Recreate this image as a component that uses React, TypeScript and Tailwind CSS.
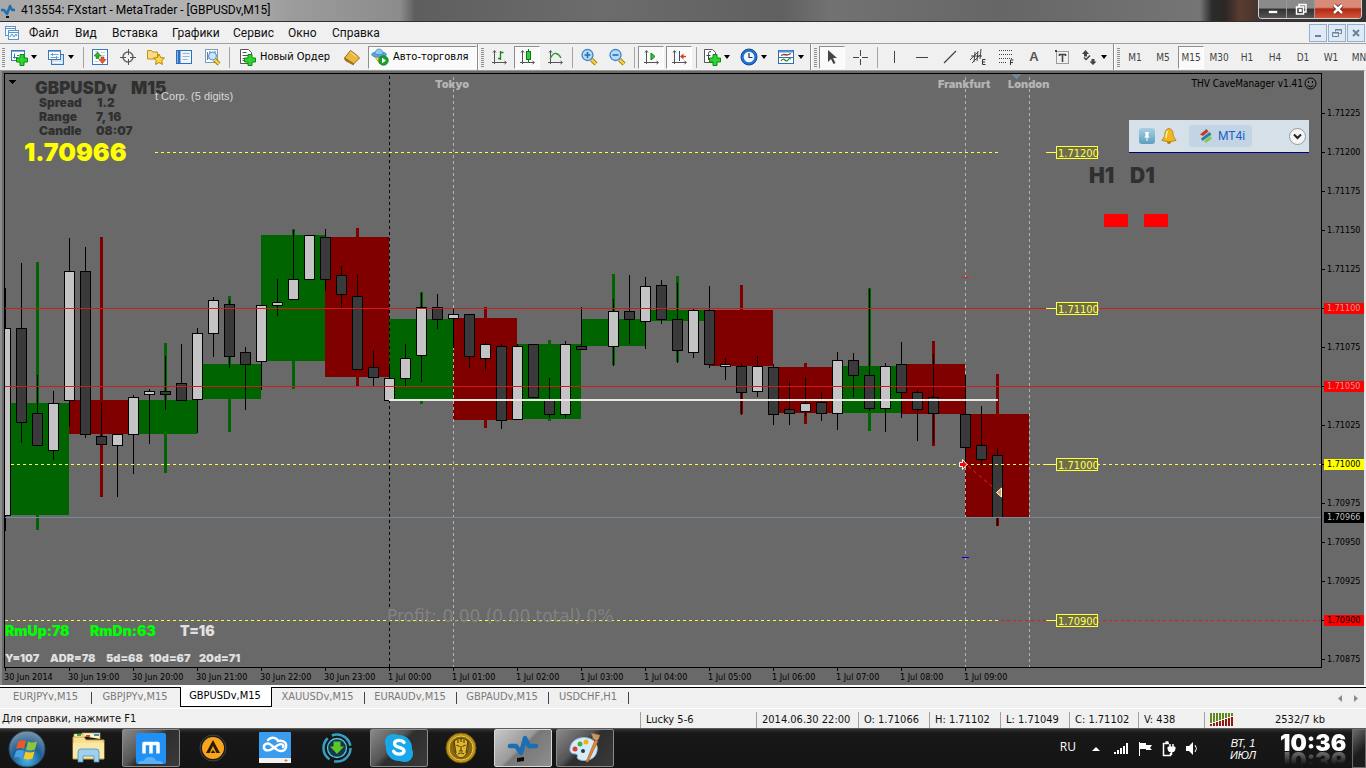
import React from "react";

type Tone = "up" | "down";

const TAHOMA = "font-['DejaVu_Sans_Condensed','Liberation_Sans',sans-serif]";
const BLACK_FACE = "font-['Inter','Liberation_Sans',sans-serif] font-black";

/* ---------- chart data: x, high, body top, body bottom, low, tone ---------- */
const candles: [number, number, number, number, number, Tone][] = [
  [5, 288, 328, 515, 530, "up"],
  [21, 263, 328, 422, 442, "down"],
  [37, 375, 413, 445, 445, "down"],
  [53, 391, 403, 450, 459, "up"],
  [69, 238, 271, 400, 426, "up"],
  [85, 247, 271, 434, 437, "down"],
  [101, 403, 436, 444, 444, "down"],
  [117, 434, 434, 445, 496, "up"],
  [133, 395, 397, 434, 473, "up"],
  [149, 389, 391, 394, 443, "up"],
  [165, 356, 391, 394, 409, "down"],
  [181, 344, 383, 400, 400, "down"],
  [197, 328, 333, 399, 432, "up"],
  [213, 297, 300, 333, 356, "up"],
  [229, 300, 304, 356, 367, "down"],
  [245, 347, 352, 364, 409, "down"],
  [261, 305, 305, 361, 389, "up"],
  [277, 279, 302, 305, 315, "up"],
  [293, 230, 279, 299, 299, "up"],
  [309, 235, 235, 279, 279, "up"],
  [325, 229, 237, 279, 290, "down"],
  [341, 266, 275, 294, 308, "down"],
  [357, 275, 296, 369, 369, "down"],
  [373, 350, 367, 377, 386, "down"],
  [389, 364, 378, 400, 400, "up"],
  [405, 344, 358, 378, 386, "up"],
  [421, 293, 307, 355, 381, "up"],
  [437, 294, 307, 319, 328, "down"],
  [453, 309, 314, 318, 347, "up"],
  [469, 314, 314, 356, 367, "down"],
  [485, 341, 344, 358, 370, "up"],
  [501, 344, 346, 420, 428, "down"],
  [517, 344, 346, 419, 419, "up"],
  [533, 344, 344, 397, 397, "down"],
  [549, 378, 400, 414, 417, "down"],
  [565, 341, 344, 414, 417, "up"],
  [581, 307, 346, 349, 349, "down"],
  [613, 299, 311, 346, 365, "up"],
  [629, 275, 311, 319, 343, "down"],
  [645, 277, 286, 321, 348, "up"],
  [661, 280, 285, 319, 323, "down"],
  [677, 283, 319, 350, 362, "down"],
  [693, 309, 310, 352, 357, "up"],
  [709, 286, 310, 364, 367, "down"],
  [725, 358, 364, 366, 379, "up"],
  [741, 363, 366, 392, 414, "down"],
  [757, 356, 366, 391, 396, "up"],
  [773, 364, 367, 414, 424, "down"],
  [789, 381, 409, 413, 424, "down"],
  [805, 377, 403, 411, 415, "up"],
  [821, 392, 402, 413, 420, "down"],
  [837, 352, 360, 413, 429, "up"],
  [853, 353, 360, 375, 396, "down"],
  [869, 289, 375, 408, 410, "down"],
  [885, 363, 366, 408, 431, "up"],
  [901, 342, 364, 392, 417, "down"],
  [917, 390, 392, 409, 440, "down"],
  [933, 354, 397, 413, 442, "down"],
  [965, 375, 414, 447, 463, "down"],
  [981, 406, 445, 459, 464, "down"],
  [997, 448, 455, 517, 525, "down"],
];

/* hourly blocks: left, right, top, bottom, wick top, wick bottom, tone */
const blocks: [number, number, number, number, number, number, Tone][] = [
  [5, 69, 403, 515, 262, 530, "up"],
  [69, 133, 400, 434, 237, 497, "down"],
  [133, 197, 400, 434, 343, 473, "up"],
  [197, 261, 364, 399, 296, 432, "up"],
  [261, 325, 235, 361, 229, 389, "up"],
  [325, 389, 237, 377, 228, 386, "down"],
  [389, 453, 319, 399, 292, 404, "up"],
  [453, 517, 318, 420, 307, 428, "down"],
  [517, 581, 344, 419, 340, 421, "up"],
  [581, 645, 319, 346, 274, 365, "up"],
  [645, 709, 310, 321, 276, 362, "up"],
  [709, 773, 310, 366, 285, 414, "down"],
  [773, 837, 367, 413, 363, 424, "down"],
  [837, 901, 366, 413, 288, 431, "up"],
  [901, 965, 364, 414, 341, 446, "down"],
  [965, 1029, 414, 517, 374, 526, "down"],
];

const prices: { v: string; cls?: string }[] = [
  { v: "1.71225" }, { v: "1.71200" }, { v: "1.71175" }, { v: "1.71150" }, { v: "1.71125" },
  { v: "1.71100", cls: "bg-[#ff0000] text-[#d09a9a]" },
  { v: "1.71075" },
  { v: "1.71050", cls: "bg-[#ff0000] text-[#d09a9a]" },
  { v: "1.71025" },
  { v: "1.71000", cls: "bg-[#ffff00] text-black" },
  { v: "1.70975" }, { v: "1.70950" }, { v: "1.70925" },
  { v: "1.70900", cls: "bg-[#ff0000] text-black" },
  { v: "1.70875" },
];

const times = [
  "30 Jun 2014", "30 Jun 19:00", "30 Jun 20:00", "30 Jun 21:00", "30 Jun 22:00", "30 Jun 23:00",
  "1 Jul 00:00", "1 Jul 01:00", "1 Jul 02:00", "1 Jul 03:00", "1 Jul 04:00", "1 Jul 05:00",
  "1 Jul 06:00", "1 Jul 07:00", "1 Jul 08:00", "1 Jul 09:00",
];

function PriceTag({ y, text }: { y: number; text: string }) {
  return (
    <g>
      <line x1="1046" x2="1057" y1={y + 0.5} y2={y + 0.5} stroke="#ffff40" />
      <rect x="1056.5" y={y - 5.5} width="41" height="12" fill="#6e6e4c" stroke="#ffff40" />
      <text x="1058" y={y + 5} fill="#ffff50" className={`${TAHOMA} text-[11px]`}>{text}</text>
    </g>
  );
}

function Plot() {
  return (
    <svg className="block h-full w-full" role="img" aria-label="GBPUSDv M15 chart">
      <g transform="translate(-5 -74)" shapeRendering="crispEdges">
        {blocks.map(([l, r, t, b, wt, wb, tone]) => (
          <g key={l} fill={tone === "up" ? "#006400" : "#800000"}>
            <rect x={l} y={t} width={r - l} height={b - t} />
            <rect x={l + 31} y={wt} width="3" height={wb - wt} />
          </g>
        ))}
        <line x1="389.5" x2="389.5" y1="76" y2="668" stroke="#000" strokeDasharray="3 3" />
        {[453.5, 965.5, 1029.5].map((x) => (
          <line key={x} x1={x} x2={x} y1="77" y2="668" stroke="#b4b4b4" strokeDasharray="3 3" />
        ))}
        {candles.map(([x, h, t, b, l, tone]) => (
          <g key={x} stroke="#000">
            <line x1={x + 0.5} x2={x + 0.5} y1={h} y2={l + 1} />
            <rect x={x - 4.5} y={t + 0.5} width="10" height={b - t} fill={tone === "up" ? "#c4c4c4" : "#3a3a3a"} />
          </g>
        ))}
        <line x1="5" x2="110%" y1="517.5" y2="517.5" stroke="#778899" />
        <line x1="5" x2="110%" y1="308.5" y2="308.5" stroke="#c81e1e" />
        <line x1="5" x2="110%" y1="386.5" y2="386.5" stroke="#c81e1e" />
        <line x1="155" x2="999" y1="152.5" y2="152.5" stroke="#ffff40" strokeDasharray="3 3" />
        <line x1="11" x2="110%" y1="464.5" y2="464.5" stroke="#ffff40" strokeDasharray="3 3" />
        <line x1="5" x2="999" y1="620.5" y2="620.5" stroke="#ffff40" strokeDasharray="3 3" />
        <line x1="1001" x2="110%" y1="620.5" y2="620.5" stroke="#e01818" strokeDasharray="3 3" />
        <rect x="389" y="399" width="609" height="2" fill="#e8e8e0" />
        <rect x="962" y="277" width="7" height="1" fill="#e02020" />
        <rect x="962" y="557" width="7" height="1" fill="#0000e0" />
        <path d="M1012 74h9v1h-1v1h-1v1h-1v1h-1v1h-1v-1h-1v-1h-1v-1h-1v-1h-1z" fill="#708898" />
        <path d="M8 80h8l-4 4z" fill="#000" />
        <PriceTag y={152} text="1.71200" />
        <PriceTag y={308} text="1.71100" />
        <PriceTag y={464} text="1.71000" />
        <PriceTag y={620} text="1.70900" />
        <rect x="1104" y="214" width="24" height="13" fill="#ff0000" />
        <rect x="1144" y="214" width="24" height="13" fill="#ff0000" />
      </g>
      <g transform="translate(-5 -74)">
        <path d="M968 466 L995 489" stroke="#e02020" strokeDasharray="4 3" />
        <path d="M959.5 462.500h3v-3l4.500 5-4.500 5v-3h-3z" fill="#ff0000" stroke="#fff" />
        <path d="M1001.500 488v9l-5-4.500z" fill="#d9a030" stroke="#fff" />
        <g className={BLACK_FACE}>
          <g fill="#303030">
            <text x="35" y="94" className="text-[17px]">GBPUSDv</text>
            <text x="131" y="94" className="text-[17px]">M15</text>
            <g className="text-[12px]">
              <text x="39" y="107">Spread</text><text x="97" y="107">1.2</text>
              <text x="39" y="121">Range</text><text x="96" y="121">7, 16</text>
              <text x="39" y="135">Candle</text><text x="96" y="135">08:07</text>
            </g>
            <text x="1089" y="183" className="text-[21px]">H1</text>
            <text x="1130" y="183" className="text-[21px]">D1</text>
          </g>
          <text x="24" y="161" fill="#ffff00" className="text-[25px]">1.70966</text>
          <g fill="#b4b4b4" className="text-[11px]">
            <text x="435" y="88">Tokyo</text>
            <text x="938" y="88">Frankfurt</text>
            <text x="1008" y="88">London</text>
          </g>
          <g fill="#00ff00" className="text-[14px]">
            <text x="5" y="636">RmUp:78</text>
            <text x="90" y="636">RmDn:63</text>
            <text x="180" y="636" fill="#e0e0e0">T=16</text>
          </g>
          <g fill="#e0e0e0" className="text-[11px]">
            <text x="5" y="662">Y=107</text><text x="50" y="662">ADR=78</text>
            <text x="106" y="662">5d=68</text><text x="149" y="662">10d=67</text>
            <text x="199" y="662">20d=71</text>
          </g>
        </g>
        <text x="155" y="100" fill="#d8d8d8" className="font-['Liberation_Sans',sans-serif] text-[11px]">t Corp. (5 digits)</text>
        <text x="387" y="622" fill="#828282" className="font-['DejaVu_Sans','Liberation_Sans',sans-serif] text-[17px]">Profit: 0.00 (0.00 total) 0%</text>
        <g stroke="#000" fill="none">
          <circle cx="1310.500" cy="83.500" r="5.500" />
          <path d="M1307.500 85.500q3 3 6 0" />
          <path d="M1308.500 81v2M1312.500 81v2" />
        </g>
      </g>
    </svg>
  );
}

/* ---------- toolbar icons ---------- */
function Ico({ children, s = 18 }: { children: React.ReactNode; s?: number }) {
  return (
    <svg width={s} height={s} viewBox="0 0 18 18" fill="none" className="shrink-0" aria-hidden="true">{children}</svg>
  );
}
const Plus = () => <path d="M10 6.500h4v3.500h3.500v4H14v3.500h-4V14H6.500v-4H10z" fill="#2fd52f" stroke="#0a8a12" />;
const Axes = ({ children }: { children: React.ReactNode }) => (
  <Ico>
    <path d="M4.500 3v13M2 14.500h14M3 4.500l1.500-2 1.500 2M14.500 13l2 1.500-2 1.500" stroke="#555" />
    {children}
  </Ico>
);
const Handle = () => <><path d="M11.500 11.500l4.500 4.500" stroke="#8a6a10" strokeWidth="4" /><path d="M11.500 11.500l4.500 4.500" stroke="#f5cf40" strokeWidth="2.500" /></>;

const I = {
  newChart: <Ico><rect x="1.500" y="2.500" width="13" height="10" fill="#fff" stroke="#3b78b5" /><path d="M2 3.500h12" stroke="#7db0e0" /><path d="M4.500 5.500v5M3 9.500h5M7 7.500h2" stroke="#3b78b5" /><Plus /></Ico>,
  profiles: <Ico><rect x="4.500" y="6.500" width="12" height="10" fill="#cfe3f7" stroke="#3b78b5" /><rect x="1.500" y="2.500" width="12" height="9" fill="#fff" stroke="#3b78b5" /><path d="M2 3.500h11" stroke="#7db0e0" /><path d="M3.500 6.500h8M3.500 9.500h8M5.500 5v3M9.500 8v3" stroke="#6f9fce" /><path d="M6 14.500h9" stroke="#fff" /></Ico>,
  market: <Ico><rect x="1.500" y="1.500" width="15" height="15" fill="#fff" stroke="#3b78b5" /><path d="M4 3.500h3M10 4.500h4M10 7.500h4M3.500 13.500h4" stroke="#b8cde0" /><path d="M3 8l3.500-4L10 8H8v2.500H5V8z" fill="#28b828" stroke="#117a11" strokeWidth=".6" /><path d="M8 11.500l3.500 4 3.500-4h-2V9h-3v2.500z" fill="#e85a28" stroke="#a83010" strokeWidth=".6" /></Ico>,
  target: <Ico><circle cx="9" cy="9" r="5" stroke="#666" strokeWidth="1.500" /><path d="M9.500 1v6M9.500 11v6M1 9.500h6M11 9.500h6" stroke="#555" /></Ico>,
  favorites: <Ico><path d="M.5 2.500h4l1 1.500h5v7H.5z" fill="#f8dc80" stroke="#c09018" /><path d="M12 6l1.700 3.500 3.800.500-2.800 2.500.8 4-3.500-2-3.500 2 .8-4L6.500 10l3.800-.5z" fill="#ffd840" stroke="#b88410" /></Ico>,
  navigator: <Ico><rect x="1.500" y="2.500" width="15" height="13" fill="#eef5fc" stroke="#3070b8" /><path d="M4 3v12" stroke="#2f6fc8" strokeWidth="3" /><path d="M7.500 5.500h7M7.500 8.500h7M7.500 11.500h5" stroke="#9ab5d0" /></Ico>,
  tester: <Ico><rect x="2.500" y="1.500" width="12" height="13" fill="#fff" stroke="#7d9cba" /><path d="M4.500 4v8M7 3v6M4 10h4M12 3v4" stroke="#5d82a8" /><circle cx="9.500" cy="8" r="4" fill="#c9e4fb" stroke="#4f8ec8" /><Handle /></Ico>,
  order: <Ico><path d="M2.500 1.500h8l3 3v11h-11z" fill="#fff" stroke="#555" /><path d="M4.500 4.500h4M4.500 7.500h6M4.500 10.500h3M4.500 12.500h2" stroke="#555" /><Plus /></Ico>,
  book: <Ico><path d="M1.500 10l6-7.500q7 5 9 7.500l-6 6z" fill="#e9b93e" stroke="#9a6a10" /><path d="M1.500 10q.5 3 1.500 3l7.500 4v-1.500z" fill="#b57a18" stroke="#875808" strokeWidth=".6" /><path d="M7.500 4l6 5" stroke="#fbe7a0" /></Ico>,
  expert: <Ico><path d="M3 8h11l-5 8z" fill="#f2d35a" stroke="#b08a18" strokeWidth=".6" /><ellipse cx="8" cy="6.500" rx="7.500" ry="2.800" fill="#58a8dc" stroke="#2876b0" strokeWidth=".6" /><path d="M3.800 6q.5-5 4.200-5t4.200 5q-4 1.500-8.400 0z" fill="#8accf0" stroke="#2876b0" strokeWidth=".6" /><circle cx="12.500" cy="12.500" r="4.800" fill="#18a428" stroke="#0a6a18" strokeWidth=".6" /><path d="M11 9.800v5.400l4-2.700z" fill="#fff" /></Ico>,
  bars: <Axes><path d="M10.500 3v9M8 10.500h2M11 4.500h2.500" stroke="#128a18" strokeWidth="1.300" /></Axes>,
  candle: <Axes><path d="M10.500 1v13" stroke="#0c7a12" /><rect x="8.500" y="3.500" width="4" height="8" fill="#2fd035" stroke="#0c7a12" /></Axes>,
  line: <Axes><path d="M4 11q3-6 6-5.500 3 .5 5 4.500" stroke="#2c9a34" strokeWidth="1.300" /></Axes>,
  zoomIn: <Ico><Handle /><circle cx="7.500" cy="7" r="5.500" fill="#b5dcfa" stroke="#3f86c6" strokeWidth="1.300" /><path d="M7.500 4v6M4.500 7h6" stroke="#2b6cb0" strokeWidth="1.600" /></Ico>,
  zoomOut: <Ico><Handle /><circle cx="7.500" cy="7" r="5.500" fill="#b5dcfa" stroke="#3f86c6" strokeWidth="1.300" /><path d="M4.500 7h6" stroke="#2b6cb0" strokeWidth="1.600" /></Ico>,
  scroll: <Axes><path d="M9 5v7l4-3.500z" fill="#35c840" stroke="#0f7a18" /></Axes>,
  shift: <Axes><path d="M9.500 3v10" stroke="#1b50a0" /><path d="M16 8.500h-4" stroke="#d04010" strokeWidth="1.300" /><path d="M13.500 5.500v6l-3.500-3z" fill="#d04010" /></Axes>,
  indicators: <Ico><path d="M1.500 1.500h8l3 3v10h-11z" fill="#fff" stroke="#555" /><path d="M8 3.500q-2.500-.5-2.500 2V12M3.500 7.500h4" stroke="#444" /><Plus /></Ico>,
  clock: <Ico><circle cx="9" cy="9" r="8" fill="#2272d4" stroke="#124a94" /><circle cx="9" cy="9" r="5.300" fill="#eef6ff" /><path d="M9 5v4.500h3.500" stroke="#333" strokeWidth="1.200" /></Ico>,
  template: <Ico><rect x="1.500" y="2.500" width="15" height="13" fill="#fff" stroke="#2f6fb4" /><path d="M2 3.500h14" stroke="#4f94dc" strokeWidth="2" /><path d="M2 9.500h14" stroke="#2f6fb4" /><path d="M4 7.500l3-1 3 .5 4-1.500" stroke="#a03020" strokeWidth="1.300" /><path d="M4 13q2-3 4-1t3 0 3-1" stroke="#208a30" strokeWidth="1.200" /></Ico>,
  cursor: <Ico><path d="M5 2v12l3-3 2.500 5 2-1-2.500-5h4z" fill="#444" /></Ico>,
  cross: <Ico><path d="M9.500 2v6M9.500 11v6M2 9.500h6M11 9.500h6" stroke="#444" /></Ico>,
  vline: <Ico><path d="M9.500 3v12" stroke="#444" /></Ico>,
  hline: <Ico><path d="M3 9.500h12" stroke="#444" /></Ico>,
  trend: <Ico><path d="M3 15L15 3" stroke="#444" strokeWidth="1.200" /></Ico>,
  channel: <Ico><path d="M1 12l8-8M3 15l9-9M6 4l-1 10M9 3L8 13M12 1l-1 10M2 8h11" stroke="#444" /><path d="M16.500 11.500h-3v5h3M13.500 14h2.500" stroke="#333" /></Ico>,
  fibo: <Ico><path d="M2 2.500h14M2 6.500h14M2 10.500h14M2 14.500h8" stroke="#444" strokeDasharray="1 1" /><path d="M13.500 17v-5h3M13.500 14.500h2.500" stroke="#333" /></Ico>,
  label: <Ico><path d="M3.500 3.500h12v12h-12z" stroke="#444" strokeDasharray="1 1" /><path d="M6 6.500h7M9.500 6v8M6.500 6v2M12.500 6v2" stroke="#444" strokeWidth="1.600" /><path d="M2 2h2v2H2z" fill="#444" /></Ico>,
  arrows: <Ico><path d="M2 6l3.500-4L9 6H7v2.500H4V6zM9.500 13.500h2V11h3v2.500h2L13 17z" fill="#444" /><path d="M4 9.500l2 2 4-4" stroke="#444" strokeWidth="1.500" /></Ico>,
};

const pressedCls = "border border-[#8f8f8f] border-r-white border-b-white bg-[#fafafa]";

function TB({ icon, label, pressed }: { icon: React.ReactNode; label: string; pressed?: boolean }) {
  return (
    <div className="flex w-7 shrink-0 items-center justify-center">
      <button aria-label={label} className={`flex h-[23px] w-[26px] items-center justify-center ${pressed ? pressedCls : ""}`}>{icon}</button>
    </div>
  );
}
function DD({ icon, label }: { icon: React.ReactNode; label: string }) {
  return (
    <button aria-label={label} className="flex w-[37px] shrink-0 items-center gap-[3px] pl-1">
      {icon}
      <svg width="6" height="4" viewBox="0 0 6 4" aria-hidden="true"><path d="M0 0h6L3 4z" fill="#000" /></svg>
    </button>
  );
}
const Sep = () => <span className="mr-[2px] ml-[3px] h-[21px] w-px shrink-0 self-center bg-[#a5a5a5]" />;
const Grip = () => <span className="mr-px ml-[2px] h-[19px] w-[3px] shrink-0 self-center bg-[repeating-linear-gradient(#8f8f8f_0_1px,#f0f0f0_1px_2px)]" />;
const Edge = () => <span className="w-[2px] shrink-0 self-stretch border-l border-[#8a8a8a] bg-white" />;

function Toolbar() {
  const frames = ["M1", "M5", "M15", "M30", "H1", "H4", "D1", "W1", "MN"];
  return (
    <div className={`${TAHOMA} flex h-[27px] shrink-0 overflow-hidden border-t border-[#a0a0a0] bg-[#f0f0f0] text-[11px]`}>
      <Grip />
      <DD icon={I.newChart} label="Новый график" />
      <DD icon={I.profiles} label="Профили" />
      <Sep />
      <TB icon={I.market} label="Обзор рынка" />
      <TB icon={I.target} label="Окно данных" />
      <TB icon={I.favorites} label="Навигатор" />
      <TB icon={I.navigator} label="Терминал" />
      <TB icon={I.tester} label="Тестер" />
      <Sep />
      <button className="flex w-[106px] shrink-0 items-center gap-1 pl-[6px] whitespace-nowrap">{I.order}Новый Ордер</button>
      <TB icon={I.book} label="Редактор" />
      <button className={`${pressedCls} ml-[2px] flex h-[23px] w-[109px] shrink-0 items-center gap-1 self-center pl-[2px] whitespace-nowrap`}>{I.expert}Авто-торговля</button>
      <Edge />
      <Grip />
      <TB icon={I.bars} label="Бары" />
      <TB icon={I.candle} label="Свечи" pressed />
      <TB icon={I.line} label="Линия" />
      <Sep />
      <TB icon={I.zoomIn} label="Увеличить" />
      <TB icon={I.zoomOut} label="Уменьшить" />
      <Sep />
      <TB icon={I.scroll} label="Автопрокрутка" pressed />
      <TB icon={I.shift} label="Сдвиг графика" pressed />
      <Sep />
      <DD icon={I.indicators} label="Индикаторы" />
      <DD icon={I.clock} label="Периоды" />
      <DD icon={I.template} label="Шаблоны" />
      <Edge />
      <Grip />
      <TB icon={I.cursor} label="Курсор" pressed />
      <TB icon={I.cross} label="Перекрестие" />
      <Sep />
      <TB icon={I.vline} label="Вертикальная линия" />
      <TB icon={I.hline} label="Горизонтальная линия" />
      <TB icon={I.trend} label="Трендовая линия" />
      <TB icon={I.channel} label="Канал" />
      <TB icon={I.fibo} label="Фибоначчи" />
      <TB icon={<span className="font-['Liberation_Sans',sans-serif] text-[13px] font-bold text-[#555]">A</span>} label="Текст" />
      <TB icon={I.label} label="Метка" />
      <DD icon={I.arrows} label="Стрелки" />
      <Edge />
      <Grip />
      {frames.map((f) => (
        <div key={f} className="flex w-7 shrink-0 items-center justify-center">
          <button className={`h-[23px] w-[26px] text-center text-[10px] text-[#444] ${f === "M15" ? pressedCls : ""}`}>{f}</button>
        </div>
      ))}
    </div>
  );
}

/* ---------- window chrome ---------- */
function TitleBar() {
  return (
    <header className="relative flex h-[22px] shrink-0 items-start justify-between border-b border-[#303030] bg-[linear-gradient(90deg,#a8a8a8_0,#b4b4b4_220px,#9c9c9c_290px,#8c8c8c_400px,#5e5e5e_415px,#6c6c6c_600px,#606060_780px,#727272_830px,#666_1000px,#757575_1200px,#2b2b2b_1212px,#2c2625_1225px,#5a3c30_1240px,#403430_1260px,#333_100%)]">
      <div className="flex items-center gap-[5px] pt-[2px]">
        <svg width="16" height="17" viewBox="0 0 16 17" aria-hidden="true"><path d="M1 8h3l3 4 3-8 2 4h3" fill="none" stroke="#1f6fb0" strokeWidth="2.500" strokeLinejoin="round" /><path d="M6 14h3v2H6z" fill="#111" /></svg>
        <h1 className="font-['Roboto','Noto_Sans',sans-serif] text-[12px] leading-[17px] whitespace-nowrap text-black">413554: FXstart - MetaTrader - [GBPUSDv,M15]</h1>
      </div>
      <div className="mr-1 flex h-[19px] shrink-0 overflow-hidden rounded-b-[4px] border border-t-0 border-[#d0d0d0]">
        <button aria-label="Свернуть" className="flex w-7 items-center justify-center border-r border-[#999] bg-[linear-gradient(#8a8a8a_0_45%,#303030_50%,#555)]">
          <svg width="12" height="12" viewBox="0 0 12 12"><rect x="1.500" y="7.500" width="9" height="3" fill="#fff" stroke="#444" strokeWidth=".7" /></svg>
        </button>
        <button aria-label="Восстановить" className="flex w-7 items-center justify-center border-r border-[#999] bg-[linear-gradient(#8a8a8a_0_45%,#303030_50%,#555)]">
          <svg width="12" height="13" viewBox="0 0 12 13" fill="none" stroke="#fff" strokeWidth="1.500"><path d="M4 4V1.500h7V9H9" /><rect x="1.500" y="4" width="7" height="7" /><rect x="4.500" y="6.700" width="1.500" height="1.500" /></svg>
        </button>
        <button aria-label="Закрыть" className="flex w-[46px] items-center justify-center bg-[linear-gradient(#d98a78_0_40%,#b02a14_50%,#d2543a)]">
          <svg width="12" height="12" viewBox="0 0 12 12"><path d="M2 2l8 8M10 2l-8 8" stroke="#5a2018" strokeWidth="4" /><path d="M2 2l8 8M10 2l-8 8" stroke="#fff" strokeWidth="2.500" /></svg>
        </button>
      </div>
    </header>
  );
}

function MenuBar() {
  const items = [
    ["Файл", "w-[46px]"], ["Вид", "w-[37px]"], ["Вставка", "w-[60px]"], ["Графики", "w-[61px]"],
    ["Сервис", "w-[55px]"], ["Окно", "w-[44px]"], ["Справка", "w-[60px]"],
  ];
  const box = "flex h-[18px] w-[18px] items-center justify-center border border-[#8fb0d0] bg-[#dfeaf6]";
  return (
    <div className="flex h-[21px] shrink-0 items-center justify-between bg-[#f0f0f0] pl-1">
      <nav className="flex items-center font-['Roboto','Noto_Sans',sans-serif] text-[12px] text-[#111]">
        <svg width="16" height="16" viewBox="0 0 16 16" className="mr-[9px]" fill="none" stroke="#5b94c8" aria-hidden="true"><rect x="1.500" y="1.500" width="10" height="9" fill="#fff" /><path d="M1.500 3.500h10" /><rect x="4.500" y="5.500" width="10" height="9" fill="#f4f9ff" /><path d="M4.500 7.500h10M6 12l2-3 2 3 2-3 1 2" /></svg>
        {items.map(([t, w]) => (
          <button key={t} className={`${w} text-left whitespace-nowrap`}><span>{t}</span></button>
        ))}
      </nav>
      <div className="flex gap-px pr-px">
        <button aria-label="Свернуть окно" className={box}><svg width="10" height="10" viewBox="0 0 10 10"><path d="M2 8h6" stroke="#6d8299" strokeWidth="2" /></svg></button>
        <button aria-label="Восстановить окно" className={box}><svg width="10" height="10" viewBox="0 0 10 10" fill="none" stroke="#6d8299"><path d="M3.500 3.500v-2h6v4h-2M3 2h7" /><path d="M.5 4.500h6v4h-6zM0 5h7" /></svg></button>
        <button aria-label="Закрыть окно" className={box}><svg width="10" height="10" viewBox="0 0 10 10"><path d="M2 2l6 6M8 2L2 8" stroke="#6d8299" strokeWidth="2" /></svg></button>
      </div>
    </div>
  );
}

function Mt4iBar() {
  return (
    <div className="absolute top-[46px] right-3 flex h-[33px] w-[180px] items-center border-b border-[#000080] bg-[#d6e0e8] pr-[3px] pl-[10px]">
      <button aria-label="Закрепить" className="flex h-4 w-4 items-center justify-center rounded-[3px] bg-[linear-gradient(#a9cfe2,#5d9fc0)]">
        <svg width="10" height="11" viewBox="0 0 10 11"><path d="M3 1h4v1H6.500v3L8 6.500H2L3.500 5V2H3zM4.500 6.500h1V10h-1z" fill="#fff" /></svg>
      </button>
      <button aria-label="Уведомления" className="ml-[6px]">
        <svg width="16" height="18" viewBox="0 0 16 18"><circle cx="8" cy="15" r="2" fill="#b87a08" /><path d="M8 1.500C4.500 2 4 5 3.800 8 3.500 11 1 12 1 13.500q7 2.500 14 0c0-1.500-2.500-2.500-2.800-5.500C12 5 11.500 2 8 1.500z" fill="#f0b820" stroke="#b07c0c" strokeWidth=".8" /><path d="M6.500 4Q5 7 5 11" stroke="#fff0a8" strokeWidth="1.500" fill="none" /></svg>
      </button>
      <button className="ml-[12px] flex h-[22px] w-[63px] items-center gap-[4px] rounded-[3px] bg-[#c3d4e4] pl-[9px] font-['Roboto','Liberation_Sans',sans-serif] text-[12px] text-[#2060c8]">
        <svg width="16" height="16" viewBox="0 0 16 16" aria-hidden="true"><path d="M2 6.500L8.500 1l2 2.500L5 8z" fill="#c43a2a" /><path d="M3 10.500L11.500 4l2 2.500-9 6.500z" fill="#2f7f9c" /><path d="M6 13l6.500-5 1.500 2.500L8 15z" fill="#7fca4c" /></svg>
        MT4i
      </button>
      <button aria-label="Меню" className="ml-auto flex h-[17px] w-[17px] items-center justify-center rounded-full border border-[#999] bg-[#f4f4f4]">
        <svg width="9" height="7" viewBox="0 0 9 7"><path d="M1 1.500l3.500 3.500L8 1.500" stroke="#222" strokeWidth="2" fill="none" /></svg>
      </button>
    </div>
  );
}

function Chart() {
  return (
    <main className={`${TAHOMA} grid min-h-0 flex-1 grid-cols-[1fr_42px] grid-rows-[1fr_17px] overflow-hidden border-t border-r-2 border-l-2 border-t-[#9a9a9a] border-r-[#e8e8e8] border-l-[#8c8c8c] bg-[#696969] pt-[2px] pl-[2px] text-[9px] text-black`}>
      <div className="relative min-h-0 min-w-0 overflow-hidden border border-black">
        <Plot />
        <p className="absolute top-[3px] right-[18px] text-[10px] leading-[13px]">THV CaveManager v1.41</p>
        <Mt4iBar />
      </div>
      <div className="relative min-h-0 overflow-hidden pt-[21px]">
        {prices.map((p) => (
          <div key={p.v} className="flex h-[39px] items-center">
            <span className={`h-px ${p.cls ? "w-[2px]" : "w-[3px]"} bg-black`} />
            <span className={`flex h-[11px] flex-1 items-center leading-[11px] ${p.cls ? `${p.cls} pl-[3px]` : "pl-[2px]"}`}>{p.v}</span>
          </div>
        ))}
        <span className="absolute top-[439px] right-0 left-[2px] h-[11px] bg-black pl-[3px] leading-[11px] text-[#c0c0c0]">1.70966</span>
      </div>
      <div className="flex overflow-hidden">
        {times.map((t) => (
          <div key={t} className="flex w-16 shrink-0 flex-col whitespace-nowrap">
            <span className="ml-px h-[3px] w-px bg-black" />
            <span className="leading-[13px]">{t}</span>
          </div>
        ))}
      </div>
      <div />
    </main>
  );
}

function ChartTabs() {
  const tabs = [
    ["EURJPYv,M15", "w-[91px]"], ["GBPJPYv,M15", "w-[88px]"], ["GBPUSDv,M15", "w-[92px]"], ["XAUUSDv,M15", "w-[93px]"],
    ["EURAUDv,M15", "w-[92px]"], ["GBPAUDv,M15", "w-[92px]"], ["USDCHF,H1", "w-[80px]"],
  ];
  return (
    <div className={`${TAHOMA} flex h-[23px] shrink-0 items-start justify-between border-t-2 border-white bg-[#f0f0f0] text-[11px]`}>
      <div className="flex h-full flex-1 border-t border-black">
        <div className="-mt-px flex pl-px">
          {tabs.map(([t, w], i) =>
            i === 2 ? (
              <button key={t} className={`${w} h-[20px] border border-t-0 border-black bg-white pr-[2px] text-black`}>{t}</button>
            ) : (
              <button key={t} className={`${w} relative h-[20px] pr-[2px] text-[#7a7a7a] after:absolute after:top-[5px] after:right-0 after:h-3 ${i === 1 ? "" : "after:w-px after:bg-[#444]"}`}>{t}</button>
            )
          )}
        </div>
        <div className="ml-auto flex items-center gap-[12px] pr-2">
          <button aria-label="Назад"><svg width="4" height="7" viewBox="0 0 4 7"><path d="M4 0v7L0 3.500z" fill="#8a8a8a" /></svg></button>
          <button aria-label="Вперёд"><svg width="4" height="7" viewBox="0 0 4 7"><path d="M0 0v7l4-3.500z" fill="#8a8a8a" /></svg></button>
        </div>
      </div>
    </div>
  );
}

function StatusBar() {
  const cells = [
    ["Lucky 5-6", "w-[116px]"], ["2014.06.30 22:00", "w-[102px]"], ["O: 1.71066", "w-[71px]"], ["H: 1.71102", "w-[71px]"],
    ["L: 1.71049", "w-[69px]"], ["C: 1.71102", "w-[69px]"], ["V: 438", "w-[66px]"],
  ];
  const cell = "h-4 shrink-0 border-l border-[#a0a0a0] pl-[5px] leading-4 whitespace-nowrap";
  return (
    <footer className={`${TAHOMA} flex h-5 shrink-0 items-center border-t border-white bg-[#f0f0f0] pt-[2px] text-[11px] text-[#111]`}>
      <span className="flex-1 pl-[2px] whitespace-nowrap">Для справки, нажмите F1</span>
      {cells.map(([t, w]) => <span key={t} className={`${w} ${cell}`}>{t}</span>)}
      <span className={`${cell} flex w-[162px] items-center justify-between pr-[41px]`}>
        <svg width="24" height="13" viewBox="0 0 24 13" aria-hidden="true">
          {[0, 1, 2, 3, 4, 5, 6, 7].map((i) => (
            <g key={i}><rect x={i * 3} y="0" width="2" height={10 - i} fill="#5e8a1a" /><rect x={i * 3} y={11 - i} width="2" height={2 + i} fill="#8c1a10" /></g>
          ))}
        </svg>
        2532/7 kb
      </span>
    </footer>
  );
}

/* ---------- taskbar ---------- */
const apps: { name: string; state?: "open" | "active"; icon: React.ReactNode }[] = [
  { name: "Проводник", icon: <svg width="34" height="32" viewBox="0 0 34 32"><path d="M2 5V2h9l2 3M10 4V1h18v6" fill="#fdf4c8" stroke="#c4a04a" strokeWidth=".7" /><path d="M5 2h4v2H5z" fill="#3aa648" /><path d="M14 3h4v2h-4z" fill="#d04838" /><path d="M22 2h5v2h-5z" fill="#3a8ed0" /><path d="M1 5h11l2 3h18v19H1z" fill="#f6df8e" stroke="#c8a448" /><path d="M1 11h31v15H1z" fill="#f9e9a8" /><path d="M6 30V20q0-3 3-3h15q3 0 3 3v10h-5v-6H11v6z" fill="#9fd0ee" stroke="#4a90c0" strokeWidth=".8" /></svg> },
  { name: "Maxthon", state: "open", icon: <svg width="30" height="31" viewBox="0 0 30 31"><rect width="30" height="31" rx="2" fill="#2090f4" /><path d="M8 20.500v-10h14v10M15 11v9.500" stroke="#fff" strokeWidth="3.500" fill="none" strokeLinejoin="round" /><path d="M2 31q1-4 6-3 1-4 6-4t6 4q6-1 7 3z" fill="#5cb0f8" /></svg> },
  { name: "AIMP", icon: <svg width="28" height="28" viewBox="0 0 28 28"><circle cx="14" cy="14" r="13" fill="#1a1a1a" stroke="#444" /><circle cx="14" cy="14" r="11" fill="#f8a41c" /><path d="M14 6l7 13h-3.500L14 12l-3.500 7H7z" fill="#2a1c08" /><path d="M11.500 19l2.500-3 2.500 3z" fill="#2a1c08" /></svg> },
  { name: "Облако", icon: <svg width="32" height="32" viewBox="0 0 32 32"><rect width="32" height="26" rx="1" fill="#3a9cec" /><rect y="26" width="32" height="5" fill="#f2f2f2" /><path d="M27 27v3M25.500 28.500h3" stroke="#f07820" /><path d="M9 8C12 4 18 6 19 9c6-1 9 2 8 6-1 5-7 5-10 2l-5-4c-3-3-8-1-7 3 1 3 5 3 8 1l6-4c4-2 6 0 5 2" fill="none" stroke="#fff" strokeWidth="2.400" strokeLinecap="round" /></svg> },
  { name: "Загрузчик", icon: <svg width="32" height="32" viewBox="0 0 32 32" fill="none"><circle cx="16" cy="16" r="13.500" stroke="#35a0c4" strokeWidth="2.500" strokeDasharray="24 5" /><circle cx="16" cy="16" r="9.500" fill="#14384a" stroke="#4fc4e4" strokeWidth="1.300" /><path d="M12.500 9.500h7v5h3.500L16 22l-7-7.500h3.500z" fill="#5cc828" /></svg> },
  { name: "Skype", state: "open", icon: <svg width="30" height="30" viewBox="0 0 30 30"><rect x="1" y="1" width="17" height="17" rx="8" fill="#18a8ea" /><rect x="12" y="12" width="17" height="17" rx="8" fill="#18a8ea" /><circle cx="15" cy="15" r="13" fill="#18a8ea" /><path d="M20 9.500c-2-3-9-3-9.500.8-.4 5 9.500 3 9.500 7.700-.4 4-8.500 4-10.500.3" stroke="#fff" strokeWidth="3.300" fill="none" strokeLinecap="round" /></svg> },
  { name: "Lion", icon: <svg width="32" height="32" viewBox="0 0 32 32" fill="none"><circle cx="16" cy="16" r="15" fill="#c09418" stroke="#705408" /><circle cx="16" cy="16" r="12" fill="#8a6a10" stroke="#e8c850" /><path d="M9 9q7-5 14 0v9q-2 7-7 8-5-1-7-8z" fill="#e0b830" stroke="#5a4206" /><path d="M11.500 13l3 1.500M20.500 13l-3 1.500M16 14v5M14 19h4M13 22q3-2 6 0M9 9l2 12M23 9l-2 12M13 8v3M19 8v3M16 7v3" stroke="#5a4206" strokeWidth="1.200" /></svg> },
  { name: "MetaTrader", state: "active", icon: <svg width="32" height="30" viewBox="0 0 32 30"><path d="M3 13h6l5 7 4-15 4 8h7" fill="none" stroke="#1c6eb4" strokeWidth="4.500" strokeLinejoin="round" strokeLinecap="round" /><path d="M10 25l7-1v4l-7 1z" fill="#0c0c0c" /></svg> },
  { name: "Paint", state: "open", icon: <svg width="34" height="32" viewBox="0 0 34 32"><path d="M2 16C3 8 12 4 20 6c9 2 11 10 8 16-3 7-13 8-18 5-2-2 1-4-2-5-3 0-7-1-6-6z" fill="#d8ebf8" stroke="#8ab4d4" /><circle cx="7" cy="17" r="2.500" fill="#d84030" /><circle cx="12" cy="12" r="2.500" fill="#40b040" /><circle cx="18" cy="10" r="2.500" fill="#f0b020" /><circle cx="15" cy="19" r="2" fill="#1c3c5c" /><path d="M18 30L27 8l3 1-10 21z" fill="#e0883c" stroke="#a05a1c" strokeWidth=".6" /><path d="M25 7q-1-4-2-6l9 2q-1 4-3 6z" fill="#c89868" stroke="#8a5c34" strokeWidth=".6" /></svg> },
];

function Taskbar() {
  return (
    <div className="flex h-10 shrink-0 items-stretch justify-between border-t border-[#5a5a5a] bg-[linear-gradient(#333_0,#181818_4px,#141414_100%)]">
      <div className="flex gap-1">
        <button aria-label="Пуск" className="mr-[2px] flex w-[54px] items-center justify-center">
          <svg width="38" height="38" viewBox="0 0 38 38">
            <defs><radialGradient id="orb" cx=".5" cy=".8" r=".8"><stop offset="0" stopColor="#46b8e8" /><stop offset=".5" stopColor="#1f5f94" /><stop offset="1" stopColor="#7d98ac" /></radialGradient></defs>
            <circle cx="19" cy="19" r="18" fill="url(#orb)" stroke="#27465c" />
            <path d="M10 12q4-3 8-1l-2 8q-4-2-8 0z" fill="#ea5a28" /><path d="M20 11.500q4 2 9 0l-2 8q-5 2-9 0z" fill="#8cc63c" />
            <path d="M8 21q4-2 8 0l-2 7q-4-2-8 0z" fill="#48a0e0" /><path d="M17.500 21.500q4 2 9 0l-2 7q-4 2-9 0z" fill="#f8c828" />
          </svg>
        </button>
        {apps.map((a) => (
          <button
            key={a.name}
            aria-label={a.name}
            className={`mb-px flex w-[58px] items-center justify-center rounded-[2px] border ${
              a.state === "active"
                ? "border-[#d8d8d8] bg-[linear-gradient(135deg,#c8c8c8_0,#9a9a9a_45%,#787878_50%,#8e8e8e)]"
                : a.state === "open"
                ? "border-[#8a8a8a] bg-[linear-gradient(135deg,#8a8a8a_0,#555_40%,#2e2e2e_50%,#3a3a3a)]"
                : "border-transparent"
            }`}
          >
            {a.icon}
          </button>
        ))}
      </div>
      <div className="flex items-center text-white">
        <span className="mr-[16px] pb-[4px] font-['Open_Sans','Noto_Sans',sans-serif] text-[12px]">RU</span>
        <svg width="8" height="4" viewBox="0 0 8 4" className="mr-[14px]"><path d="M0 4h8L4 0z" fill="#fff" /></svg>
        <svg width="15" height="12" viewBox="0 0 15 12" className="mr-[9px]" fill="#fff"><path d="M0 9h2v2H0zM3 7h2v4H3zM6 5h2v6H6zM9 3h2v8H9zM12 0h2v11h-2z" /></svg>
        <svg width="15" height="14" viewBox="0 0 15 14" className="mr-[8px]"><path d="M1.500 0v14" stroke="#fff" /><path d="M2 1h6v2h6l-2 3 2 2H8V7H2z" fill="#fff" /></svg>
        <svg width="15" height="16" viewBox="0 0 15 16" className="mr-[10px]" fill="none" stroke="#fff"><path d="M8 2.500H2.500v12h7V12M4.500 1h3" strokeWidth="1.500" /><path d="M7 6h7v2q0 3-3.500 3T7 8z" fill="#fff" /><path d="M9 3v3M12 3v3M10.500 11v3" strokeWidth="1.500" /></svg>
        <svg width="13" height="13" viewBox="0 0 13 13" className="mr-[26px]"><path d="M0 4h3l4-4v13L3 9H0z" fill="#fff" /><path d="M9 3q3 3.500 0 7" stroke="#fff" fill="none" /></svg>
        <div className="mr-[19px] w-9 text-center font-['Liberation_Sans',sans-serif] text-[11px] leading-[12px] whitespace-nowrap italic">
          <div>ВТ, 1</div>
          <div>ИЮЛ</div>
        </div>
        <div className="mr-1 w-[68px] self-start pt-[2px]">
          <time className={`${BLACK_FACE} block text-[23px] leading-[24px] [-webkit-box-reflect:below_-7px_linear-gradient(transparent_30%,rgba(255,255,255,0.5))]`}>10:36</time>
        </div>
        <button aria-label="Показать рабочий стол" className="w-[14px] self-stretch border border-[#6a6a6a] bg-[linear-gradient(135deg,#6a6a6a,#1c1c1c_60%)]" />
      </div>
    </div>
  );
}

export default function App() {
  return (
    <div className="flex h-screen w-full flex-col overflow-hidden bg-[#f0f0f0]">
      <TitleBar />
      <MenuBar />
      <Toolbar />
      <Chart />
      <ChartTabs />
      <StatusBar />
      <Taskbar />
    </div>
  );
}
